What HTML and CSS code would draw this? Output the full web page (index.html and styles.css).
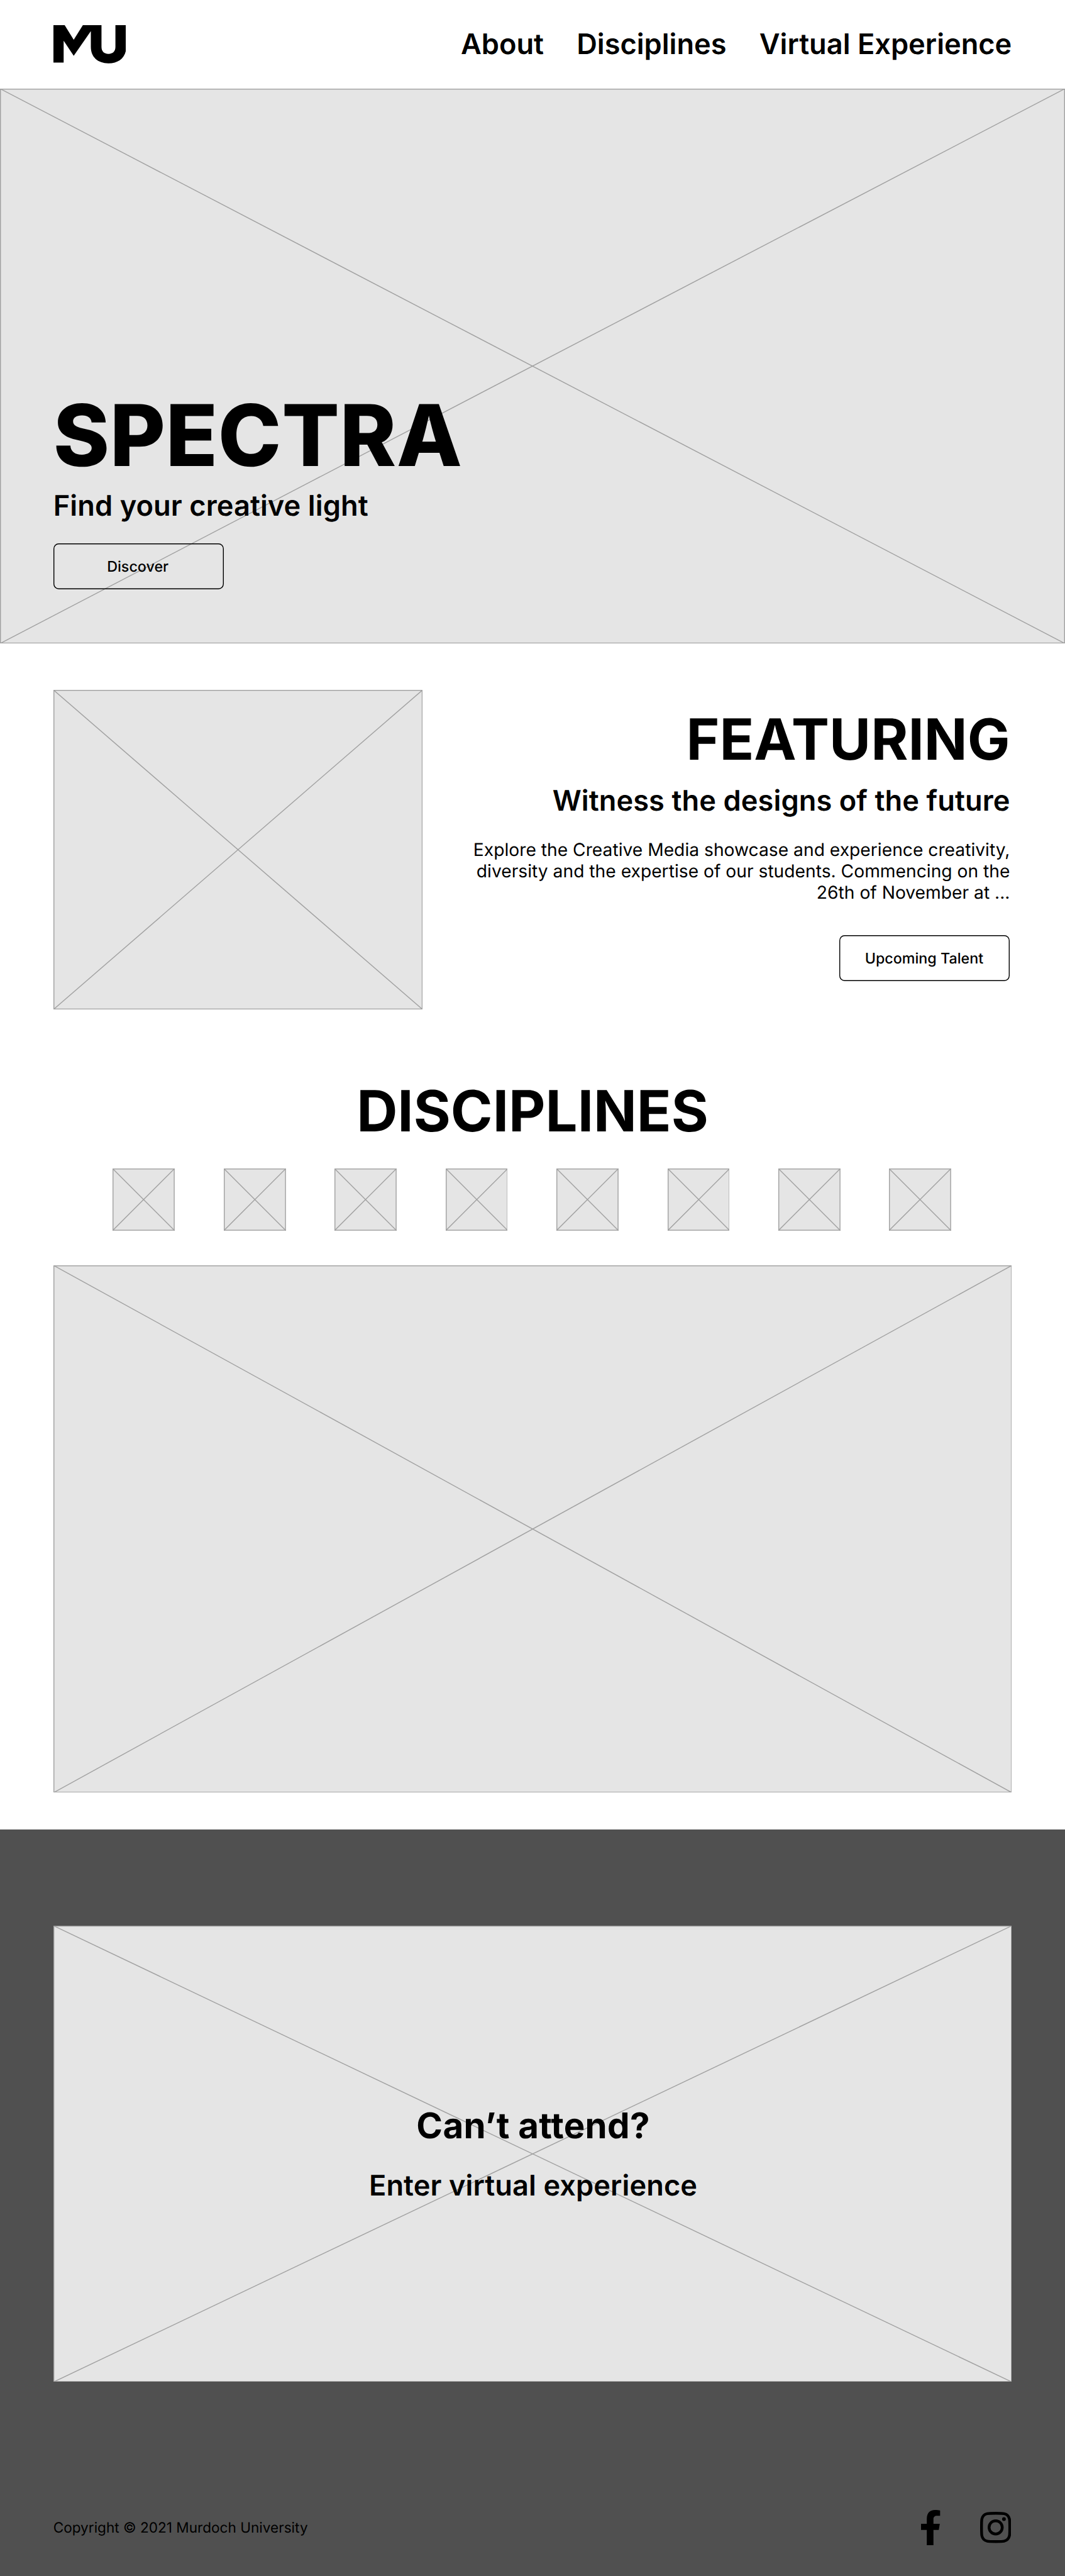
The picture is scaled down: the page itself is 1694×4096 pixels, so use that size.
FILE: index.html
```html
<!DOCTYPE html>
<html lang="en">
<head>
<meta charset="utf-8">
<title>Spectra – Murdoch University</title>
<link rel="stylesheet" href="styles.css">
</head>
<body>
<header class="header">
  <svg class="logo" viewBox="0 0 164 86" role="img" aria-label="MU"><path d="M0 0H25.3L45.7 33L66.3 0H108.3V49C108.3 59 114 64.7 124 64.7S139.7 59 139.7 49V0H164V49C164 72 148 86 124 86S84.3 72 84.3 49V13.3L45.7 69L23 35V84.3H0Z"/></svg>
  <nav class="nav"><a>About</a><a>Disciplines</a><a>Virtual Experience</a></nav>
</header>

<section class="hero">
  <svg class="placeholder"><rect/><line x2="100%" y2="100%"/><line y1="100%" x2="100%"/></svg>
  <div class="hero-content">
    <h1 class="hero-title">SPECTRA</h1>
    <p class="subtitle">Find your creative light</p>
    <a class="button hero-button">Discover</a>
  </div>
</section>

<section class="featuring">
  <svg class="placeholder featuring-image"><rect/><line x2="100%" y2="100%"/><line y1="100%" x2="100%"/></svg>
  <div class="featuring-text">
    <h2 class="title">FEATURING</h2>
    <p class="subtitle featuring-subtitle">Witness the designs of the future</p>
    <p class="featuring-copy">Explore the Creative Media showcase and experience creativity,<br>diversity and the expertise of our students. Commencing on the<br>26th of November at ...</p>
    <a class="button">Upcoming Talent</a>
  </div>
</section>

<section class="disciplines">
  <h2 class="title">DISCIPLINES</h2>
  <div class="tiles">
    <svg class="placeholder tile"><rect/><line x2="100%" y2="100%"/><line y1="100%" x2="100%"/></svg>
    <svg class="placeholder tile"><rect/><line x2="100%" y2="100%"/><line y1="100%" x2="100%"/></svg>
    <svg class="placeholder tile"><rect/><line x2="100%" y2="100%"/><line y1="100%" x2="100%"/></svg>
    <svg class="placeholder tile"><rect/><line x2="100%" y2="100%"/><line y1="100%" x2="100%"/></svg>
    <svg class="placeholder tile"><rect/><line x2="100%" y2="100%"/><line y1="100%" x2="100%"/></svg>
    <svg class="placeholder tile"><rect/><line x2="100%" y2="100%"/><line y1="100%" x2="100%"/></svg>
    <svg class="placeholder tile"><rect/><line x2="100%" y2="100%"/><line y1="100%" x2="100%"/></svg>
    <svg class="placeholder tile"><rect/><line x2="100%" y2="100%"/><line y1="100%" x2="100%"/></svg>
  </div>
  <svg class="placeholder showcase"><rect/><line x2="100%" y2="100%"/><line y1="100%" x2="100%"/></svg>
</section>

<div class="bottom">
  <section class="virtual">
    <svg class="placeholder"><rect/><line x2="100%" y2="100%"/><line y1="100%" x2="100%"/></svg>
    <div class="virtual-content">
      <h2 class="virtual-title">Can’t attend?</h2>
      <p class="subtitle">Enter virtual experience</p>
    </div>
  </section>
  <footer class="footer">
    <p class="copyright">Copyright © 2021 Murdoch University</p>
    <div class="social">
      <svg class="facebook" viewBox="0 0 43 80" role="img" aria-label="Facebook"><path d="M13 80V45H0V31H13V20C13 7 20 0 31.5 0C36 0 40 .4 43 .9V13H36.500C30.500 13 28 16 28 20V31H42.300L40 45H28V80Z"/></svg>
      <svg class="instagram" viewBox="0 0 70 70" role="img" aria-label="Instagram"><path class="ring" d="M35 3.150C48 3.150 50.500 3.200 54 4C61 5.500 64.500 9 66 16C66.800 19.500 66.850 22 66.850 35S66.800 50.500 66 54C64.500 61 61 64.500 54 66C50.500 66.800 48 66.850 35 66.850S19.500 66.800 16 66C9 64.500 5.500 61 4 54C3.200 50.500 3.150 48 3.150 35S3.200 19.500 4 16C5.500 9 9 5.500 16 4C19.500 3.200 22 3.150 35 3.150Z"/><circle class="ring" cx="35" cy="35" r="14.850"/><circle cx="53.700" cy="16.300" r="4.200"/></svg>
    </div>
  </footer>
</div>
</body>
</html>
```
FILE: styles.css
```css
/* 1rem is one 24th of the page width */
html { font-size: calc(100vw / 24); }

* { box-sizing: border-box; margin: 0; padding: 0; }

body {
  font-family: Inter, "Liberation Sans", sans-serif;
  line-height: 1.21;
  color: #000;
  background: #fff;
  text-rendering: geometricPrecision;
  font-variant-ligatures: none;
}

svg { display: block; }

.placeholder { width: 100%; height: 100%; }
.placeholder rect {
  x: .01rem;
  y: .01rem;
  width: calc(100% - .02rem);
  height: calc(100% - .02rem);
  fill: #e5e5e5;
}
.placeholder rect, .placeholder line { stroke: #a1a1a1; stroke-width: .02rem; }

.title { font-size: 1.28rem; font-weight: 700; }
.subtitle { font-size: .64rem; font-weight: 600; letter-spacing: .0012rem; }

.button {
  display: flex;
  align-items: center;
  justify-content: center;
  width: 3.84rem;
  height: 1.04rem;
  padding: .02rem .03rem 0 0;
  border-radius: .12rem;
  box-shadow: inset 0 0 0 .02rem #000;
  font-size: .33rem;
  font-weight: 500;
}

.header {
  display: flex;
  align-items: center;
  justify-content: space-between;
  height: 2rem;
  padding: 0 1.2rem;
}
.logo { width: 1.64rem; height: .86rem; }
.nav { display: flex; gap: .74rem; font-size: .64rem; font-weight: 600; }

.hero, .virtual { display: grid; }
.hero > *, .virtual > * { grid-area: 1 / 1; }
.hero { height: 12.5rem; }
.hero-content { padding: 6.66rem 1.2rem 0; }
.hero-title { font-size: 1.92rem; font-weight: 800; letter-spacing: .008rem; margin-bottom: .03rem; }
.hero-button { margin-top: .45rem; }

.featuring {
  display: flex;
  justify-content: space-between;
  height: 9.25rem;
  padding: 1.04rem 1.24rem 0 1.2rem;
}
.featuring-image { width: 8.32rem; height: 7.2rem; }
.featuring-text {
  display: flex;
  flex-direction: column;
  align-items: flex-end;
  padding-top: .34rem;
  text-align: right;
}
.featuring-subtitle { margin-top: .225rem; }
.featuring-copy { margin: .485rem 0 .71rem; font-size: .4rem; line-height: .48rem; }

.disciplines {
  display: flex;
  flex-direction: column;
  align-items: center;
  height: 17.47rem;
  padding: .5rem 1.2rem 0;
}
.tiles { display: flex; gap: 1.1rem; margin: .525rem .02rem 0 0; }
.tile { width: 1.4rem; height: 1.4rem; }
.showcase { height: 11.88rem; margin-top: .78rem; flex: none; }

.bottom { height: 16.81rem; padding: 2.16rem 1.2rem 0; background: #505050; }
.virtual { height: 10.28rem; }
.virtual-content { padding: 4.03rem 0 0 .03rem; text-align: center; }
.virtual-title { font-size: .8rem; font-weight: 700; letter-spacing: .004rem; margin-bottom: .475rem; }
.footer {
  display: flex;
  justify-content: space-between;
  align-items: center;
  margin-top: 2.88rem;
  height: .8rem;
}
.copyright { font-size: .32rem; padding-top: .03rem; }
.social { display: flex; align-items: center; gap: .89rem; padding-right: .02rem; }
.facebook { width: .43rem; height: .8rem; }
.instagram { width: .7rem; height: .7rem; }
.ring { fill: none; stroke: #000; stroke-width: 6.3; }
```
